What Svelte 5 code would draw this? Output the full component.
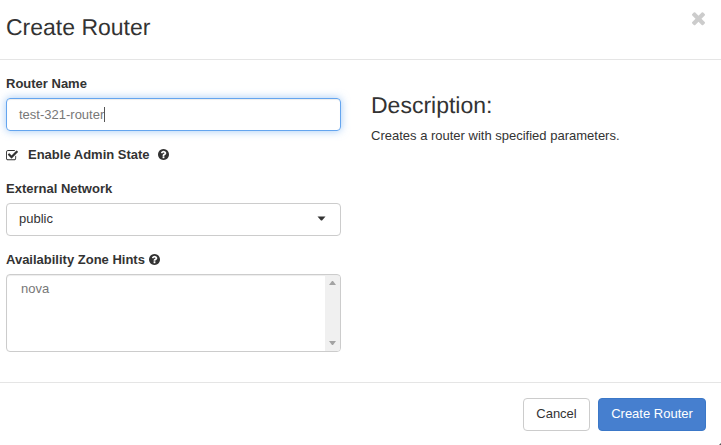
<script>
  let name = $state('test-321-router');
  const zones = ['nova'];
</script>

{#snippet help()}
  <svg class="help" viewBox="128 128 1536 1536" aria-hidden="true"><path d="M1024 1376v-192q0-14-9-23t-23-9h-192q-14 0-23 9t-9 23v192q0 14 9 23t23 9h192q14 0 23-9t9-23zm256-672q0-88-55.500-163t-138.500-116-170-41q-243 0-371 213-15 24 8 42l132 100q7 6 19 6 16 0 25-12 53-68 86-92 34-24 86-24 48 0 85.500 26t37.500 59q0 38-20 61t-68 45q-63 28-115.500 86.500t-52.500 125.500v36q0 14 9 23t23 9h192q14 0 23-9t9-23q0-19 21.500-49.500t54.500-49.500q32-18 49-28.500t46-35 44.500-48 28-60.500 12.500-81zm384 192q0 209-103 385.500t-279.500 279.500-385.500 103-385.500-103-279.500-279.500-103-385.500 103-385.500 279.500-279.500 385.500-103 385.500 103 279.500 279.500 103 385.500z" /></svg>
{/snippet}

<div class="modal">
  <header>
    <h3>Create Router</h3>
    <svg class="close" viewBox="302 238 1188 1188" aria-label="Close"><path d="M1490 1130q0 40-28 68l-136 136q-28 28-68 28t-68-28l-294-294-294 294q-28 28-68 28t-68-28l-136-136q-28-28-28-68t28-68l294-294-294-294q-28-28-28-68t28-68l136-136q28-28 68-28t68 28l294 294 294-294q28-28 68-28t68 28l136 136q28 28 28 68t-28 68l-294 294 294 294q28 28 28 68z" /></svg>
  </header>

  <main>
    <section class="form">
      <div class="label">Router Name</div>
      <div class="control focused"><span>{name}</span><i class="caret"></i></div>

      <div class="label check">
        <svg class="box" viewBox="64 256 1664 1408" aria-hidden="true"><path d="M1472 930v318q0 119-84.500 203.500t-203.500 84.500h-832q-119 0-203.500-84.500t-84.500-203.500v-832q0-119 84.500-203.500t203.500-84.500h832q63 0 117 25 15 7 18 23 3 17-9 29l-49 49q-10 10-23 10-3 0-9-2-23-6-45-6h-832q-66 0-113 47t-47 113v832q0 66 47 113t113 47h832q66 0 113-47t47-113v-254q0-13 9-22l64-64q10-10 23-10 6 0 12 3 20 8 20 29zm231-489l-814 814q-24 24-57 24t-57-24l-430-430q-24-24-24-57t24-57l110-110q24-24 57-24t57 24l263 263 647-647q24-24 57-24t57 24l110 110q24 24 24 57t-24 57z" /></svg>
        <span>Enable Admin State</span>
        {@render help()}
      </div>

      <div class="label network">External Network</div>
      <div class="control select">
        <span>public</span>
        <svg class="arrow" viewBox="0 0 9 5" aria-hidden="true"><path d="M.5 .5h8L5 4.500H4z" /></svg>
      </div>

      <div class="label zone"><span>Availability Zone Hints</span>{@render help()}</div>
      <div class="list">
        <div class="options">
          {#each zones as zone}<div>{zone}</div>{/each}
        </div>
        <div class="scroll">
          <svg viewBox="0 0 7 4" aria-hidden="true"><path d="M0 4h7L4 0H3z" /></svg>
          <svg viewBox="0 0 7 4" aria-hidden="true"><path d="M0 0h7L4 4H3z" /></svg>
        </div>
      </div>
    </section>

    <section class="info">
      <h3>Description:</h3>
      <p>Creates a router with specified parameters.</p>
    </section>
  </main>

  <footer>
    <button class="cancel">Cancel</button>
    <button class="primary">Create Router</button>
  </footer>
  <i class="corner"></i>
</div>

<style>
  .modal {
    position: relative;
    box-sizing: border-box;
    width: 721px;
    height: 445px;
    overflow: hidden;
    background: #fff;
    color: #333;
    font: 13px/18px "Liberation Sans", Arial, sans-serif;
  }
  .modal :global(*) { box-sizing: border-box; }
  svg { display: block; fill: currentColor; overflow: visible; flex: none; }
  h3 { margin: 0; font-size: 23px; line-height: 25px; font-weight: 400; text-rendering: geometricPrecision; }
  p { margin: 0; }
  header {
    display: flex;
    justify-content: space-between;
    height: 60px;
    padding: 15px 16px 0 6px;
    border-bottom: 1px solid #e5e5e5;
  }
  .close { width: 13px; height: 13px; margin-top: -2.500px; color: #ccc; }
  main { display: flex; gap: 30px; height: 322px; padding: 15px 6px 0; }
  .form { width: 335px; }
  .label { display: flex; align-items: center; height: 18px; font-weight: 700; }
  .control {
    display: flex;
    align-items: center;
    height: 33px;
    margin-top: 5px;
    padding: 0 12px;
    border: 1px solid #ccc;
    border-radius: 4px;
  }
  .focused {
    color: #777;
    border-color: #64a5ef;
    box-shadow: inset 0 1px 1px rgba(0, 0, 0, .075), 0 0 8px rgba(100, 165, 239, .6);
  }
  .caret { width: 1px; height: 15px; background: #555; }
  .check { margin-top: 15px; }
  .box { width: 12px; height: 10.200px; margin: 2px 10px 0 0; }
  .help { width: 11px; height: 11px; margin: 0 0 1px 4px; }
  .check .help { margin-left: 8px; }
  .network { margin-top: 16px; }
  .select { justify-content: space-between; padding-right: 14px; padding-bottom: 2px; }
  .arrow { width: 9px; height: 5px; }
  .zone { margin-top: 15px; }
  .list {
    display: flex;
    height: 78px;
    margin-top: 5px;
    overflow: hidden;
    border: 1px solid #ccc;
    border-radius: 4px;
    box-shadow: inset 0 1px 1px rgba(0, 0, 0, .075);
    color: #777;
  }
  .options { flex: 1; padding: 5px 14px; }
  .scroll {
    display: flex;
    flex-direction: column;
    justify-content: space-between;
    align-items: center;
    width: 15px;
    margin-top: 1px;
    padding: 5px 0 6px;
    background: #f0f0f0;
    color: #a3a3a3;
  }
  .scroll svg { width: 7px; height: 4px; }
  .info { padding-top: 18px; }
  .info p { margin-top: 9px; }
  footer {
    display: flex;
    justify-content: flex-end;
    gap: 8px;
    height: 63px;
    padding: 15px 15px 0;
    border-top: 1px solid #e5e5e5;
  }
  button {
    height: 33px;
    padding: 0 12px 2px;
    border: 1px solid #ccc;
    border-radius: 4px;
    background: #fff;
    color: #333;
    font: inherit;
  }
  .cancel { width: 67px; }
  .primary { width: 108px; border-color: #3b78c8; background: #467fcf; color: #fff; }
  .corner {
    position: absolute;
    right: 0;
    bottom: 0;
    border: 1px solid #555;
    border-left-color: transparent;
    border-top-color: transparent;
  }
</style>
